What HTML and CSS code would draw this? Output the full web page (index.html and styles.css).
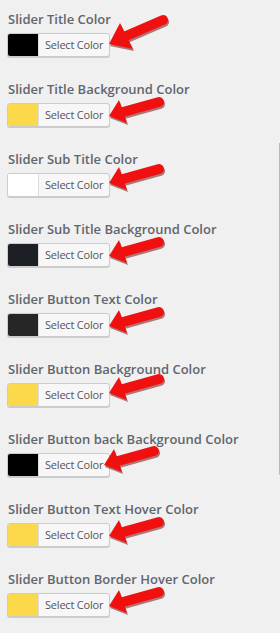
FILE: index.html
```html
<!DOCTYPE html>
<html>
<head>
    <title>Slider Colors</title>
    <link rel="stylesheet" href="styles.css">
</head>
<body>

<div class="settings">
    <div class="field">
        <label>Slider Title Color</label>
        <button class="color-btn"><span class="swatch swatch-black"></span><span class="btn-text">Select Color</span></button>
        <svg class="arrow arrow-steep" width="66" height="46" viewBox="0 0 66 46"><g transform="translate(1,2)" fill="#6a0000" stroke="#6a0000" opacity="0.5"><line x1="20" y1="25" x2="57" y2="9" stroke-width="10" stroke-linecap="round"/><polygon points="3,33 14,12 27,38" stroke="none"/></g><g fill="#f01010" stroke="#f01010"><line x1="20" y1="25" x2="57" y2="9" stroke-width="10" stroke-linecap="round"/><polygon points="3,33 14,12 27,38" stroke="none"/></g></svg>
    </div>
    <div class="field">
        <label>Slider Title Background Color</label>
        <button class="color-btn"><span class="swatch swatch-yellow"></span><span class="btn-text">Select Color</span></button>
        <svg class="arrow" width="66" height="42" viewBox="0 0 66 42"><g transform="translate(1,2)" fill="#6a0000" stroke="#6a0000" opacity="0.5"><line x1="17" y1="26" x2="53" y2="16" stroke-width="10" stroke-linecap="round"/><polygon points="3,30 13,14 21,37" stroke="none"/></g><g fill="#f01010" stroke="#f01010"><line x1="17" y1="26" x2="53" y2="16" stroke-width="10" stroke-linecap="round"/><polygon points="3,30 13,14 21,37" stroke="none"/></g></svg>
    </div>
    <div class="field">
        <label>Slider Sub Title Color</label>
        <button class="color-btn"><span class="swatch swatch-white"></span><span class="btn-text">Select Color</span></button>
        <svg class="arrow arrow-high" width="66" height="42" viewBox="0 0 66 42"><g transform="translate(1,2)" fill="#6a0000" stroke="#6a0000" opacity="0.5"><line x1="17" y1="26" x2="53" y2="16" stroke-width="10" stroke-linecap="round"/><polygon points="3,30 13,14 21,37" stroke="none"/></g><g fill="#f01010" stroke="#f01010"><line x1="17" y1="26" x2="53" y2="16" stroke-width="10" stroke-linecap="round"/><polygon points="3,30 13,14 21,37" stroke="none"/></g></svg>
    </div>
    <div class="field">
        <label>Slider Sub Title Background Color</label>
        <button class="color-btn"><span class="swatch swatch-dark"></span><span class="btn-text">Select Color</span></button>
        <svg class="arrow" width="66" height="42" viewBox="0 0 66 42"><g transform="translate(1,2)" fill="#6a0000" stroke="#6a0000" opacity="0.5"><line x1="17" y1="26" x2="53" y2="16" stroke-width="10" stroke-linecap="round"/><polygon points="3,30 13,14 21,37" stroke="none"/></g><g fill="#f01010" stroke="#f01010"><line x1="17" y1="26" x2="53" y2="16" stroke-width="10" stroke-linecap="round"/><polygon points="3,30 13,14 21,37" stroke="none"/></g></svg>
    </div>
    <div class="field">
        <label>Slider Button Text Color</label>
        <button class="color-btn"><span class="swatch swatch-charcoal"></span><span class="btn-text">Select Color</span></button>
        <svg class="arrow" width="66" height="42" viewBox="0 0 66 42"><g transform="translate(1,2)" fill="#6a0000" stroke="#6a0000" opacity="0.5"><line x1="17" y1="26" x2="53" y2="16" stroke-width="10" stroke-linecap="round"/><polygon points="3,30 13,14 21,37" stroke="none"/></g><g fill="#f01010" stroke="#f01010"><line x1="17" y1="26" x2="53" y2="16" stroke-width="10" stroke-linecap="round"/><polygon points="3,30 13,14 21,37" stroke="none"/></g></svg>
    </div>
    <div class="field">
        <label>Slider Button Background Color</label>
        <button class="color-btn"><span class="swatch swatch-yellow"></span><span class="btn-text">Select Color</span></button>
        <svg class="arrow arrow-high" width="66" height="42" viewBox="0 0 66 42"><g transform="translate(1,2)" fill="#6a0000" stroke="#6a0000" opacity="0.5"><line x1="17" y1="26" x2="53" y2="16" stroke-width="10" stroke-linecap="round"/><polygon points="3,30 13,14 21,37" stroke="none"/></g><g fill="#f01010" stroke="#f01010"><line x1="17" y1="26" x2="53" y2="16" stroke-width="10" stroke-linecap="round"/><polygon points="3,30 13,14 21,37" stroke="none"/></g></svg>
    </div>
    <div class="field">
        <label>Slider Button back Background Color</label>
        <button class="color-btn"><span class="swatch swatch-black"></span><span class="btn-text">Select Color</span></button>
        <svg class="arrow arrow-left" width="66" height="42" viewBox="0 0 66 42"><g transform="translate(1,2)" fill="#6a0000" stroke="#6a0000" opacity="0.5"><line x1="17" y1="26" x2="53" y2="16" stroke-width="10" stroke-linecap="round"/><polygon points="3,30 13,14 21,37" stroke="none"/></g><g fill="#f01010" stroke="#f01010"><line x1="17" y1="26" x2="53" y2="16" stroke-width="10" stroke-linecap="round"/><polygon points="3,30 13,14 21,37" stroke="none"/></g></svg>
    </div>
    <div class="field">
        <label>Slider Button Text Hover Color</label>
        <button class="color-btn"><span class="swatch swatch-yellow"></span><span class="btn-text">Select Color</span></button>
        <svg class="arrow" width="66" height="42" viewBox="0 0 66 42"><g transform="translate(1,2)" fill="#6a0000" stroke="#6a0000" opacity="0.5"><line x1="17" y1="26" x2="53" y2="16" stroke-width="10" stroke-linecap="round"/><polygon points="3,30 13,14 21,37" stroke="none"/></g><g fill="#f01010" stroke="#f01010"><line x1="17" y1="26" x2="53" y2="16" stroke-width="10" stroke-linecap="round"/><polygon points="3,30 13,14 21,37" stroke="none"/></g></svg>
    </div>
    <div class="field">
        <label>Slider Button Border Hover Color</label>
        <button class="color-btn"><span class="swatch swatch-yellow"></span><span class="btn-text">Select Color</span></button>
        <svg class="arrow" width="66" height="42" viewBox="0 0 66 42"><g transform="translate(1,2)" fill="#6a0000" stroke="#6a0000" opacity="0.5"><line x1="17" y1="26" x2="53" y2="16" stroke-width="10" stroke-linecap="round"/><polygon points="3,30 13,14 21,37" stroke="none"/></g><g fill="#f01010" stroke="#f01010"><line x1="17" y1="26" x2="53" y2="16" stroke-width="10" stroke-linecap="round"/><polygon points="3,30 13,14 21,37" stroke="none"/></g></svg>
    </div>
    <div class="side-line"></div>
</div>

</body>
</html>
```

FILE: styles.css
```css
body {
    margin: 0;
    background-color: #f0f0f0;
    font-family: "Open Sans", Arial, sans-serif;
}

.settings {
    position: relative;
    padding: 0 0 0 7px;
}

.field {
    position: relative;
    height: 70px;
    padding-top: 9px;
    box-sizing: border-box;
}

.field label {
    display: block;
    margin-left: 1px;
    margin-bottom: 4px;
    font-size: 13px;
    line-height: 20px;
    font-weight: 600;
    color: #5f666d;
}

.color-btn {
    display: flex;
    align-items: stretch;
    width: 103px;
    height: 24px;
    padding: 0;
    border: 1px solid #cccccc;
    border-radius: 3px;
    background-color: #f7f7f7;
    box-shadow: 0 1px 0 #cccccc;
    overflow: hidden;
    cursor: pointer;
    font-family: "Open Sans", Arial, sans-serif;
}

.swatch {
    width: 30px;
    border-right: 1px solid #dddddd;
}

.swatch-black {
    background-color: #000000;
}

.swatch-yellow {
    background-color: #fcd94a;
}

.swatch-white {
    background-color: #ffffff;
}

.swatch-dark {
    background-color: #1c2024;
}

.swatch-charcoal {
    background-color: #262626;
}

.btn-text {
    flex: 1;
    padding-left: 6px;
    font-size: 11px;
    line-height: 22px;
    letter-spacing: -0.2px;
    text-align: left;
    color: #555555;
}

.arrow {
    position: absolute;
    left: 99px;
    top: 16px;
}

.arrow-steep {
    top: 11px;
}

.arrow-high {
    top: 13px;
}

.arrow-left {
    left: 94px;
    top: 15px;
}

.side-line {
    position: absolute;
    right: 0;
    top: 143px;
    width: 1px;
    height: 332px;
    background-color: #bbbbbb;
}
```
